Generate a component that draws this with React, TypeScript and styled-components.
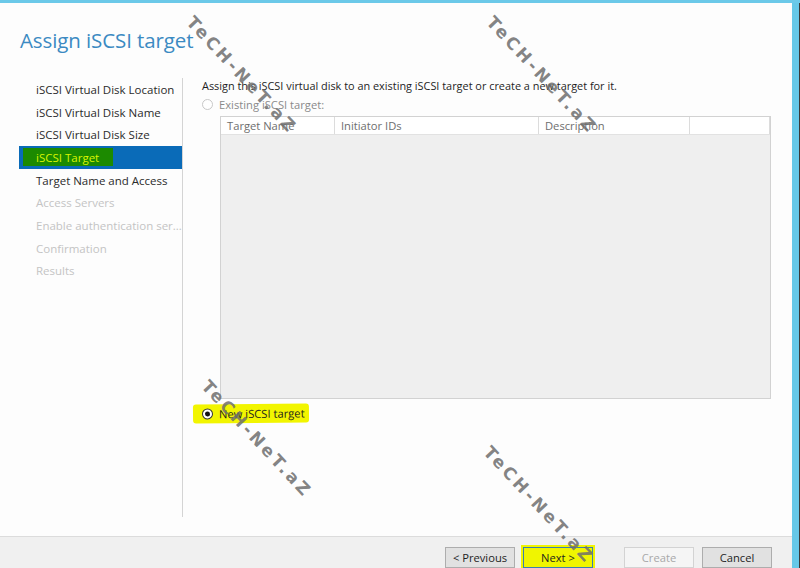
import styled, { createGlobalStyle } from "styled-components";

const GlobalStyle = createGlobalStyle`
  html, body {
    margin: 0;
    padding: 0;
    background: #ffffff;
  }
  body {
    font-family: "Open Sans", "Noto Sans", Arial, sans-serif;
  }
`;

const steps = [
  { label: "iSCSI Virtual Disk Location", state: "done" },
  { label: "iSCSI Virtual Disk Name", state: "done" },
  { label: "iSCSI Virtual Disk Size", state: "done" },
  { label: "iSCSI Target", state: "active" },
  { label: "Target Name and Access", state: "done" },
  { label: "Access Servers", state: "todo" },
  { label: "Enable authentication ser...", state: "todo" },
  { label: "Confirmation", state: "todo" },
  { label: "Results", state: "todo" },
];

const columns = [
  { title: "Target Name", width: 114 },
  { title: "Initiator IDs", width: 204 },
  { title: "Description", width: 151 },
  { title: "", width: 80 },
];

const marks = [
  { x: 190, y: 6 },
  { x: 490, y: 6 },
  { x: 205, y: 370 },
  { x: 487, y: 436 },
];

export default function App() {
  return (
    <>
      <GlobalStyle />
      <Window>
        <Page>
          <Title>Assign iSCSI target</Title>
          <Main>
            <Sidebar>
              {steps.map((s) => (
                <Step key={s.label} $state={s.state}>
                  {s.state === "active" ? <Marked>{s.label}</Marked> : s.label}
                </Step>
              ))}
            </Sidebar>
            <Content>
              <Intro>
                Assign this iSCSI virtual disk to an existing iSCSI target or create a new target for it.
              </Intro>
              <RadioRow $disabled>
                <Radio $disabled />
                Existing iSCSI target:
              </RadioRow>
              <Table>
                <HeaderRow>
                  {columns.map((c, i) => (
                    <HeaderCell key={i} style={{ width: c.width }}>
                      {c.title}
                    </HeaderCell>
                  ))}
                </HeaderRow>
                <TableBody />
              </Table>
              <RadioRow $spaced>
                <Highlight>
                  <Radio $checked />
                  New iSCSI target
                </Highlight>
              </RadioRow>
            </Content>
          </Main>
          <Footer>
            <Button>&lt; Previous</Button>
            <Button $primary>Next &gt;</Button>
            <Button $disabled $spaced>
              Create
            </Button>
            <Button>Cancel</Button>
          </Footer>
        </Page>
        <SideEdge />
        {marks.map((m, i) => (
          <Watermark key={i} style={{ left: m.x, top: m.y }}>
            TeCH-NeT.aZ
          </Watermark>
        ))}
      </Window>
    </>
  );
}

const Window = styled.div`
  position: relative;
  width: 800px;
  height: 568px;
  display: flex;
  overflow: hidden;
  border-top: 3px solid #6bc9e9;
  box-sizing: border-box;
  background: #fdfdfd;
`;

const Page = styled.div`
  width: 792px;
  display: flex;
  flex-direction: column;
`;

const SideEdge = styled.div`
  width: 7px;
  background: #66c8e8;
  border-right: 1px solid #3a3a3a;
`;

const Title = styled.h1`
  margin: 0;
  padding: 24px 0 0 20px;
  height: 50px;
  box-sizing: border-box;
  font-weight: 400;
  font-size: 20.5px;
  line-height: 26px;
  color: #3b8ac2;
  letter-spacing: -0.1px;
`;

const Main = styled.div`
  display: flex;
  height: 439px;
  margin-top: 25px;
`;

const Sidebar = styled.div`
  width: 163px;
  padding-left: 19px;
  border-right: 1px solid #d4d4d4;
  display: flex;
  flex-direction: column;
`;

const Step = styled.div<{ $state: string }>`
  height: 22.7px;
  display: flex;
  align-items: center;
  padding-left: 17px;
  font-size: 11.5px;
  white-space: nowrap;
  overflow: hidden;
  color: ${(p) => (p.$state === "todo" ? "#c4c4c4" : "#2b2b2b")};
  background: ${(p) => (p.$state === "active" ? "#0a6bb8" : "transparent")};
`;

const Marked = styled.span`
  background: #1c8a00;
  color: #d9f500;
  margin-left: -13px;
  padding: 2px 14px 1px 13px;
`;

const Content = styled.div`
  flex: 1;
  padding-left: 19px;
  padding-right: 20px;
  display: flex;
  flex-direction: column;
`;

const Intro = styled.div`
  font-size: 10.9px;
  line-height: 15px;
  color: #1e1e1e;
  white-space: nowrap;
`;

const RadioRow = styled.div<{ $disabled?: boolean; $spaced?: boolean }>`
  display: flex;
  align-items: center;
  gap: 6px;
  height: 20px;
  margin-top: ${(p) => (p.$spaced ? "4px" : "1px")};
  font-size: 11.2px;
  color: ${(p) => (p.$disabled ? "#8a8a8a" : "#1e1e1e")};
`;

const Highlight = styled.span`
  display: flex;
  align-items: center;
  gap: 6px;
  background: #f2f500;
  margin-left: -9px;
  padding: 2px 4px 2px 9px;
  border-radius: 3px;
  transform: rotate(-0.6deg);
`;

const Radio = styled.span<{ $disabled?: boolean; $checked?: boolean }>`
  width: 11px;
  height: 11px;
  border-radius: 50%;
  box-sizing: border-box;
  border: 1px solid ${(p) => (p.$disabled ? "#c8c8c8" : "#333")};
  background: #fff;
  display: flex;
  align-items: center;
  justify-content: center;
  &::after {
    content: "";
    width: 5px;
    height: 5px;
    border-radius: 50%;
    background: ${(p) => (p.$checked ? "#111" : "transparent")};
  }
`;

const Table = styled.div`
  margin: 2px 0 0 18px;
  width: 551px;
  height: 283px;
  border: 1px solid #d2d2d2;
  box-sizing: border-box;
  display: flex;
  flex-direction: column;
`;

const HeaderRow = styled.div`
  display: flex;
  height: 17px;
  background: #fff;
  border-bottom: 1px solid #e2e2e2;
`;

const HeaderCell = styled.div`
  box-sizing: border-box;
  padding-left: 6px;
  border-right: 1px solid #dcdcdc;
  font-size: 11.2px;
  line-height: 17px;
  color: #6e6e6e;
  white-space: nowrap;
  overflow: hidden;
`;

const TableBody = styled.div`
  flex: 1;
  background: #efefef;
`;

const Footer = styled.div`
  margin-top: 19px;
  flex: 1;
  border-top: 1px solid #dcdcdc;
  background: #f0f0f0;
  display: flex;
  justify-content: flex-end;
  align-items: flex-start;
  gap: 8px;
  padding: 10px 20px 0 0;
  box-sizing: border-box;
  overflow: hidden;
`;

const Button = styled.button<{ $primary?: boolean; $disabled?: boolean; $spaced?: boolean }>`
  width: 70px;
  height: 21px;
  flex: none;
  font-family: "Open Sans", "Noto Sans", Arial, sans-serif;
  font-size: 11.2px;
  line-height: 19px;
  padding: 0;
  margin-left: ${(p) => (p.$spaced ? "23px" : "0")};
  color: ${(p) => (p.$disabled ? "#a8a8a8" : "#1e1e1e")};
  background: ${(p) => (p.$primary ? "#f0f500" : p.$disabled ? "#f5f5f5" : "#e1e1e1")};
  border: 1px solid ${(p) => (p.$primary ? "#3c7fb1" : p.$disabled ? "#d3d3d3" : "#adadad")};
  box-shadow: ${(p) => (p.$primary ? "0 0 0 2px #f0f500" : "none")};
`;

const Watermark = styled.div`
  position: absolute;
  transform-origin: left center;
  transform: rotate(47deg);
  font-family: "DejaVu Sans", sans-serif;
  font-weight: 700;
  font-size: 17px;
  letter-spacing: 3px;
  color: rgba(110, 110, 110, 0.85);
  white-space: nowrap;
  pointer-events: none;
`;
